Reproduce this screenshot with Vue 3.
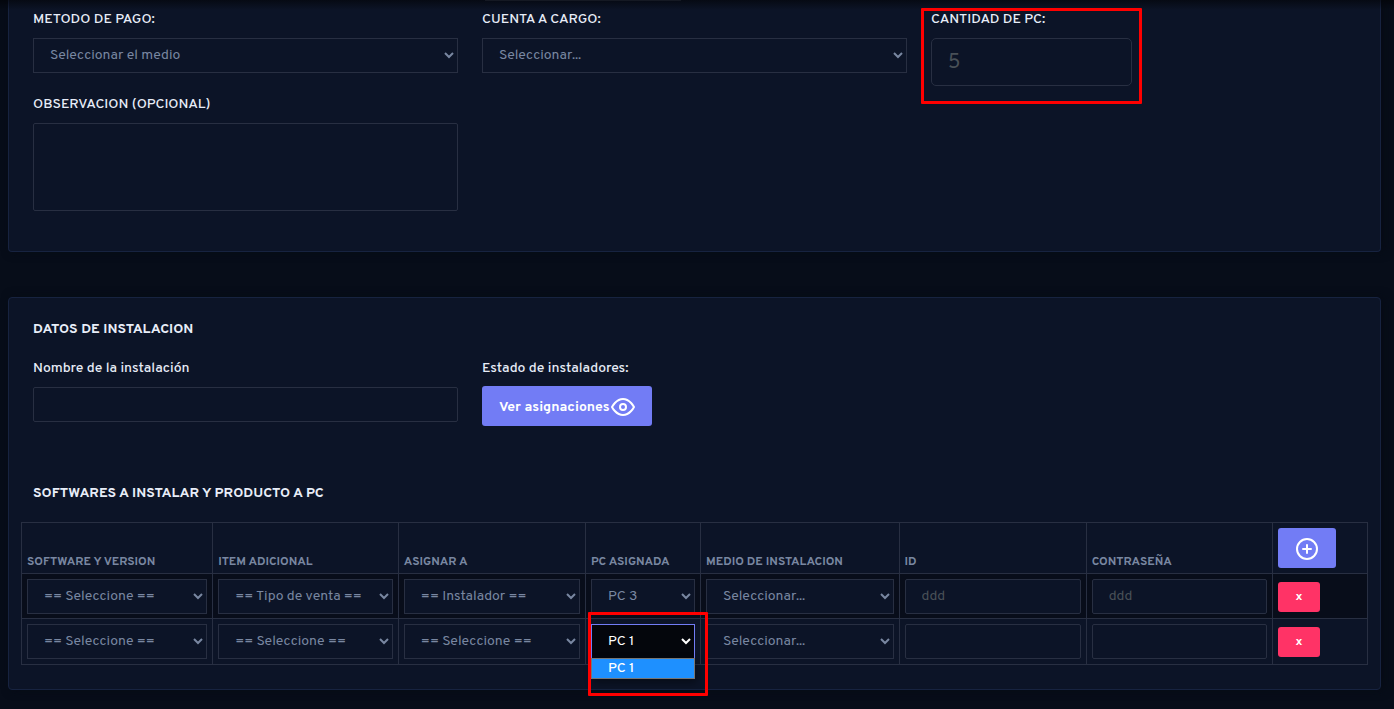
<script setup>
import { reactive } from 'vue'

const headers = [
  'SOFTWARE Y VERSION',
  'ITEM ADICIONAL',
  'ASIGNAR A',
  'PC ASIGNADA',
  'MEDIO DE INSTALACION',
  'ID',
  'CONTRASEÑA'
]

const rows = reactive([
  {
    software: '== Seleccione ==',
    item: '== Tipo de venta ==',
    assignee: '== Instalador ==',
    pc: 'PC 3',
    medium: 'Seleccionar...',
    hint: 'ddd',
    open: false
  },
  {
    software: '== Seleccione ==',
    item: '== Seleccione ==',
    assignee: '== Seleccione ==',
    pc: 'PC 1',
    medium: 'Seleccionar...',
    hint: '',
    open: true
  }
])
</script>

<template>
  <main class="page">
    <section class="card card-sale">
      <div class="grid">
        <div class="field span-2">
          <label for="metodo">METODO DE PAGO:</label>
          <select id="metodo" class="control"><option>Seleccionar el medio</option></select>
        </div>
        <div class="field span-2 edge">
          <label for="cuenta">CUENTA A CARGO:</label>
          <select id="cuenta" class="control"><option>Seleccionar...</option></select>
        </div>
        <div class="field marked">
          <label for="cantidad">CANTIDAD DE PC:</label>
          <input id="cantidad" class="control control-lg" type="text" placeholder="5" />
          <span class="mark mark-field"></span>
        </div>
        <div class="field span-2 first">
          <label for="observacion">OBSERVACION (OPCIONAL)</label>
          <textarea id="observacion" class="control area"></textarea>
        </div>
      </div>
    </section>

    <section class="card card-install">
      <h2>DATOS DE INSTALACION</h2>
      <div class="grid">
        <div class="field span-2">
          <label for="nombre">Nombre de la instalación</label>
          <input id="nombre" class="control rounded" type="text" />
        </div>
        <div class="field span-2">
          <span class="caption">Estado de instaladores:</span>
          <button type="button" class="btn btn-primary">
            Ver asignaciones
            <svg class="icon" viewBox="0 0 24 24" aria-hidden="true">
              <path d="M1 12s4-8 11-8 11 8 11 8-4 8-11 8-11-8-11-8z" />
              <circle cx="12" cy="12" r="3" />
            </svg>
          </button>
        </div>
      </div>

      <h2 class="table-title">SOFTWARES A INSTALAR Y PRODUCTO A PC</h2>
      <table>
        <colgroup>
          <col class="c-software" /><col class="c-item" /><col class="c-assignee" /><col class="c-pc" />
          <col class="c-medium" /><col class="c-id" /><col class="c-pass" /><col class="c-action" />
        </colgroup>
        <thead>
          <tr>
            <th v-for="h in headers" :key="h" scope="col">{{ h }}</th>
            <th scope="col">
              <button type="button" class="btn btn-primary btn-add" aria-label="Agregar">
                <svg class="icon" viewBox="0 0 24 24" aria-hidden="true">
                  <circle cx="12" cy="12" r="10" />
                  <path d="M12 8v8M8 12h8" />
                </svg>
              </button>
            </th>
          </tr>
        </thead>
        <tbody>
          <tr v-for="(row, i) in rows" :key="i">
            <td><select class="control" aria-label="Software y version"><option>{{ row.software }}</option></select></td>
            <td><select class="control" aria-label="Item adicional"><option>{{ row.item }}</option></select></td>
            <td><select class="control" aria-label="Asignar a"><option>{{ row.assignee }}</option></select></td>
            <td>
              <div class="marked">
                <select class="control" :class="{ open: row.open }" aria-label="PC asignada"><option>{{ row.pc }}</option></select>
                <ul v-if="row.open" class="menu" role="listbox" aria-label="PC asignada">
                  <li role="option" aria-selected="true">{{ row.pc }}</li>
                </ul>
                <span v-if="row.open" class="mark mark-menu"></span>
              </div>
            </td>
            <td><select class="control" aria-label="Medio de instalacion"><option>{{ row.medium }}</option></select></td>
            <td><input class="control rounded" type="text" aria-label="ID" :placeholder="row.hint" /></td>
            <td><input class="control rounded" type="text" aria-label="Contraseña" :placeholder="row.hint" /></td>
            <td><button type="button" class="btn btn-danger">x</button></td>
          </tr>
        </tbody>
      </table>
    </section>
  </main>
</template>

<style>
body {
  background: #070d19;
}
</style>

<style scoped>
* {
  box-sizing: border-box;
}

.page {
  position: relative;
  padding: 0 13px 19px 8px;
  color: #e8edf8;
  font: 500 14px/21px Overpass, Roboto, "Liberation Sans", sans-serif;
}

.page::before {
  content: "";
  position: absolute;
  z-index: 1;
  inset: 0 0 auto;
  height: 10px;
  background: linear-gradient(rgba(0, 0, 0, 0.5), rgba(0, 0, 0, 0));
}

.card {
  background: #0c1427;
  border: 1px solid #172340;
  border-radius: 4px;
  box-shadow: 3px 0 10px #060b15;
}

.card-sale {
  padding: 9px 24px 40px;
  border-top: 0;
  border-radius: 0 0 4px 4px;
}

.card-install {
  margin-top: 45px;
  padding: 21px 24px 24px;
}

.grid {
  display: grid;
  grid-template-columns: repeat(6, minmax(0, 1fr));
  gap: 8px 24px;
  align-items: start;
}

.span-2 {
  grid-column-end: span 2;
}

.first {
  grid-column-start: 1;
}

/* Lower edge of the field scrolled out above */
.edge {
  position: relative;
}

.edge::before {
  content: "";
  position: absolute;
  top: -9px;
  left: 3px;
  width: 46%;
  border-top: 1px solid #282f42;
}

label,
.caption {
  display: block;
  margin-bottom: 8px;
}

h2 {
  margin: 0 0 18px;
  font-size: 14px;
  line-height: 21px;
  font-weight: 700;
}

.table-title {
  margin-top: 57px;
}

.control {
  display: block;
  width: 100%;
  height: 35px;
  margin: 0;
  padding: 0 0 0 16px;
  background-color: #0c1427;
  border: 1px solid #282f42;
  border-radius: 0;
  outline: 0;
  color: #7987a1;
  font: 400 14px/21px Overpass, Roboto, "Liberation Sans", sans-serif;
}

select.control {
  padding-left: 12px;
}

.control::placeholder {
  color: #495057;
  opacity: 1;
}

.rounded {
  border-radius: 2px;
}

input.control-lg {
  height: 48px;
  padding-top: 2px;
  font-size: 20px;
  border-radius: 5px;
}

.area {
  height: 88px;
  border-radius: 2px;
  resize: none;
}

.btn {
  display: inline-flex;
  align-items: center;
  justify-content: center;
  border: 0;
  border-radius: 3px;
  color: #fff;
  font: 700 14px/21px Overpass, Roboto, "Liberation Sans", sans-serif;
}

.btn-primary {
  gap: 1px;
  height: 40px;
  margin: 0;
  padding: 2px 17px 0;
  background: #727cf5;
}

.field .btn {
  margin-top: -1px;
}

.btn-danger {
  width: 42px;
  height: 30px;
  padding: 2px 0 0;
  background: #ff3366;
  font-size: 12px;
}

.icon {
  width: 24px;
  height: 24px;
  fill: none;
  stroke: currentColor;
  stroke-width: 2;
  stroke-linecap: round;
  stroke-linejoin: round;
}

table {
  width: calc(100% + 24px);
  margin: 0 -12px;
  table-layout: fixed;
  border-collapse: collapse;
}

.c-software { width: 14.2%; }
.c-item { width: 13.8%; }
.c-assignee { width: 13.9%; }
.c-pc { width: 8.55%; }
.c-medium { width: 14.75%; }
.c-id { width: 13.9%; }
.c-pass { width: 13.85%; }
.c-action { width: 7.05%; }

th,
td {
  padding: 5px;
  border: 1px solid #282f42;
  text-align: left;
}

th {
  vertical-align: bottom;
  color: #7987a1;
  font-size: 12px;
  line-height: 12px;
  font-weight: 700;
}

th .btn {
  display: flex;
  width: 58px;
}

td {
  vertical-align: middle;
}

tbody tr:nth-child(odd) {
  background: #080d1a;
}

tbody tr:nth-child(odd) td {
  padding-bottom: 4px;
}

td .btn {
  display: flex;
}

select.open {
  background-color: #04060c;
  border-color: #727cf5;
  color: #fff;
}

.marked {
  position: relative;
}

.mark {
  position: absolute;
  z-index: 2;
  border: 3px solid #f00;
  border-radius: 1px;
  pointer-events: none;
}

.mark-field {
  inset: -1px -10px -18px;
}

.mark-menu {
  inset: -12px -13px -37px -3px;
}

.menu {
  position: absolute;
  z-index: 1;
  top: 34px;
  left: 0;
  right: 0;
  margin: 0;
  padding: 0;
  list-style: none;
  background: #1e90ff;
  border: 1px solid #767676;
  box-shadow: 2px 4px 8px rgba(0, 0, 0, 0.4);
}

.menu li {
  padding-left: 16px;
  color: #fff;
  line-height: 19px;
}
</style>
